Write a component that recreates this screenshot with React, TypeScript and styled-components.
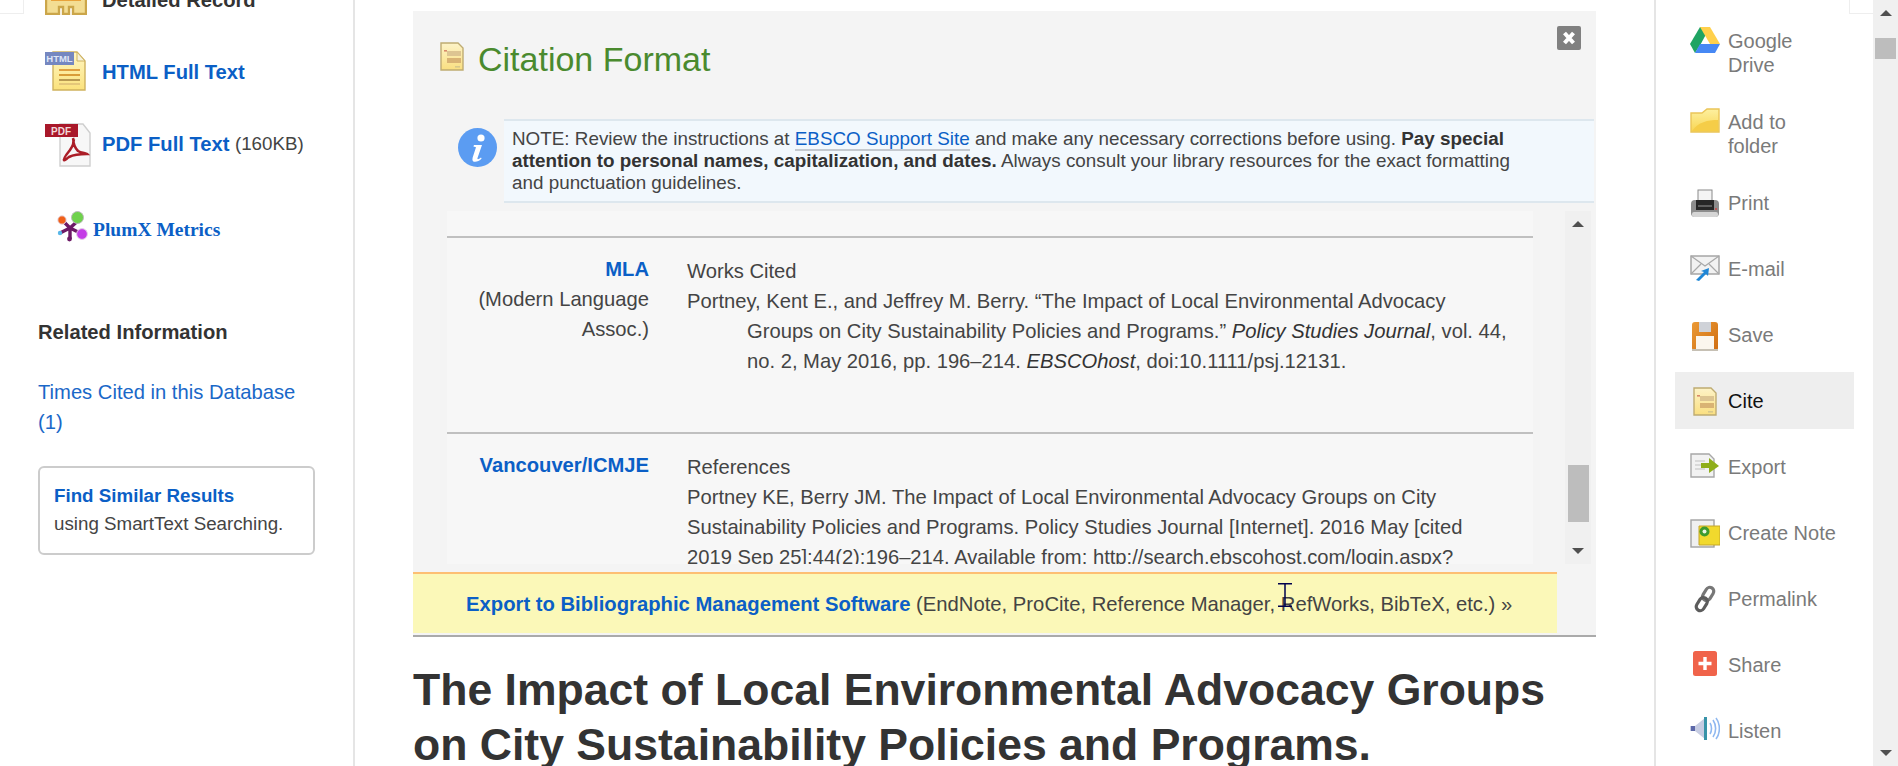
import React from "react";
import styled, { createGlobalStyle } from "styled-components";

const GlobalStyle = createGlobalStyle`
  html, body {
    margin: 0;
    padding: 0;
    background: #fff;
    overflow: hidden;
  }
  body {
    font-family: "Liberation Sans", Arial, sans-serif;
    color: #333;
  }
`;

/* icons */
const DetailIcon = () => (
  <svg width="42" height="38" viewBox="0 0 42 38">
    <path d="M1 0h40v37H28v-7h-4v7H18v-7h-4v7H1z" fill="#f3dd93" stroke="#cba64a" strokeWidth="2.4" />
    <rect x="6" y="19" width="30" height="5" fill="#e8a33c" />
  </svg>
);

const HtmlIcon = () => (
  <svg width="42" height="40" viewBox="0 0 42 40">
    <defs>
      <linearGradient id="htmlPaper" x1="0" y1="0" x2="0" y2="1">
        <stop offset="0" stopColor="#fff6c4" />
        <stop offset="1" stopColor="#fbe27c" />
      </linearGradient>
    </defs>
    <path d="M8 1h24l8 9v29H8z" fill="url(#htmlPaper)" stroke="#cfb25e" strokeWidth="1.4" />
    <path d="M32 1v9h8z" fill="#f5f1da" stroke="#cfb25e" />
    <rect x="14" y="18" width="21" height="2" fill="#e0a040" />
    <rect x="14" y="23" width="21" height="2" fill="#d99c38" />
    <rect x="14" y="28" width="21" height="2" fill="#b89a52" />
    <rect x="14" y="32" width="21" height="2" fill="#e4c779" />
    <rect x="0" y="1" width="29" height="13" fill="#7587c0" />
    <text x="14.5" y="11" textAnchor="middle" fontSize="9.5" fontWeight="700" fill="#dfe5f7" fontFamily="Liberation Sans">HTML</text>
  </svg>
);

const PdfIcon = () => (
  <svg width="46" height="44" viewBox="0 0 46 44">
    <path d="M15 1h23l7 9v33H15z" fill="#f7f7f7" stroke="#cfcfcf" strokeWidth="1.4" />
    <rect x="0" y="1" width="33" height="13" fill="#a9182a" />
    <text x="16" y="12" textAnchor="middle" fontSize="10" fontWeight="700" fill="#f1d9d9" fontFamily="Liberation Sans">PDF</text>
    <path
      d="M29 16c-2 4 2 10 4 12 3 2 8 2 9 3-4 0-12 0-18 3-3 2-4 4-5 3s2-5 6-10c3-4 4-9 3-12"
      fill="none"
      stroke="#ab1d27"
      strokeWidth="2.6"
    />
  </svg>
);

const PlumIcon = () => (
  <svg width="31" height="31" viewBox="0 0 31 31">
    <path d="M5 9l8 8M24 7l-11 10M25 23L13 17M3 22l10-5M13 17v11" stroke="#6d1a66" strokeWidth="3.4" fill="none" />
    <circle cx="5" cy="9" r="4.2" fill="#f06018" stroke="#e8dce8" />
    <circle cx="20.500" cy="6.500" r="6" fill="#6fd24c" stroke="#bbb" />
    <circle cx="25" cy="23" r="5.400" fill="#c43de6" stroke="#e5cfe9" />
    <circle cx="3" cy="22" r="2.200" fill="#59b7e8" />
    <circle cx="12.500" cy="28" r="2.400" fill="#6d1a66" />
  </svg>
);

const CiteIcon = () => (
  <svg width="24" height="29" viewBox="0 0 24 29">
    <defs>
      <linearGradient id="citePaper" x1="0" y1="0" x2="0" y2="1">
        <stop offset="0" stopColor="#fdf3c8" />
        <stop offset="1" stopColor="#fadf80" />
      </linearGradient>
    </defs>
    <path d="M1 1h17l5 5v22H1z" fill="url(#citePaper)" stroke="#bfac72" strokeWidth="1.4" />
    <rect x="4" y="8" width="3" height="1.600" fill="#d88a6a" />
    <rect x="7" y="9" width="14" height="5" fill="#ddc592" />
    <rect x="7" y="16" width="14" height="5" fill="#d9b374" />
    <rect x="15" y="24" width="5" height="1.600" fill="#d8c88a" />
  </svg>
);

const InfoIcon = () => (
  <svg width="39" height="39" viewBox="0 0 39 39">
    <circle cx="19.500" cy="19.500" r="19.500" fill="#5b9cf2" />
    <circle cx="23" cy="10" r="3.600" fill="#fff" />
    <path d="M16 17h8l-4.500 13c-.5 1.500.8 1.800 3.500-.5l.6 1c-3.500 4-10.500 5.200-9-.8l3.400-10.500-2.600-.6z" fill="#fff" />
  </svg>
);

const DriveIcon = () => (
  <svg width="30" height="26" viewBox="0 0 30 26">
    <path d="M10 0h10l-9.500 17.500L5 26 0 17z" fill="#1fa463" />
    <path d="M10 0h10l10 17H20z" fill="#ffd04b" />
    <path d="M10 17h20l-5 9H5z" fill="#4688f4" />
  </svg>
);

const FolderIcon = () => (
  <svg width="30" height="25" viewBox="0 0 30 25">
    <defs>
      <linearGradient id="folderFill" x1="0" y1="0" x2="0" y2="1">
        <stop offset="0" stopColor="#fdf0a0" />
        <stop offset="1" stopColor="#f8d552" />
      </linearGradient>
    </defs>
    <path d="M1 5h11l5-4h12v23H1z" fill="url(#folderFill)" stroke="#eac558" strokeWidth="1.400" />
    <path d="M2 23c6-9 16-11 26-11v11z" fill="#f5cd48" />
  </svg>
);

const PrintIcon = () => (
  <svg width="30" height="30" viewBox="0 0 30 30">
    <rect x="8" y="1" width="14" height="11" fill="#f4f4f4" stroke="#8a8a8a" />
    <rect x="1" y="11" width="28" height="17" rx="4" fill="#8d8d8d" />
    <rect x="6" y="11" width="18" height="10" fill="#262626" />
    <rect x="8" y="16" width="14" height="2" fill="#5d5d5d" />
    <rect x="2" y="23" width="26" height="5" rx="2" fill="#d5d5d5" />
    <circle cx="26" cy="20" r="1" fill="#c44" />
  </svg>
);

const MailIcon = () => (
  <svg width="30" height="26" viewBox="0 0 30 26">
    <rect x="1" y="1" width="28" height="18" fill="#f2f2f2" stroke="#a0a0a0" strokeWidth="1.400" />
    <path d="M1 1l14 10L29 1M1 19l10-10M29 19L19 9" fill="none" stroke="#a8a8a8" strokeWidth="1.200" />
    <path d="M6 25l8-8-3-1 8-3-1 8-2-2-7 7z" fill="#1f86d6" />
  </svg>
);

const SaveIcon = () => (
  <svg width="28" height="31" viewBox="0 0 28 31">
    <defs>
      <linearGradient id="saveBody" x1="0" y1="0" x2="1" y2="1">
        <stop offset="0" stopColor="#eb9a35" />
        <stop offset="1" stopColor="#cf6d12" />
      </linearGradient>
    </defs>
    <rect x="1" y="1" width="26" height="29" rx="3" fill="url(#saveBody)" />
    <rect x="8" y="1" width="12" height="10" fill="#cfd2d8" />
    <rect x="5" y="15" width="18" height="13" fill="#fbf6ee" />
    <rect x="1" y="28" width="26" height="2" fill="#c6c0b4" />
  </svg>
);

const ExportIcon = () => (
  <svg width="30" height="25" viewBox="0 0 30 25">
    <path d="M1 1h18l5 5v18H1z" fill="#f2f2f2" stroke="#a8a8a8" strokeWidth="1.400" />
    <path d="M5 8h10M5 12h8M5 16h10" stroke="#c0c0c0" />
    <path d="M11 10h8V5l10 8-10 7v-5h-8z" fill="#8fae1b" />
  </svg>
);

const NoteIcon = () => (
  <svg width="30" height="29" viewBox="0 0 30 29">
    <rect x="1" y="1" width="23" height="27" fill="#f0f0f0" stroke="#a2a2a2" strokeWidth="1.400" />
    <path d="M9 7h21v19H9z" fill="#f1d92d" stroke="#c5a62a" />
    <circle cx="14.500" cy="12.500" r="5" fill="#3d9a2d" />
    <circle cx="14.500" cy="12.500" r="2" fill="#e8f4e0" />
  </svg>
);

const LinkIcon = () => (
  <svg width="24" height="28" viewBox="0 0 24 28">
    <g transform="rotate(32 12 14)" fill="none" strokeWidth="3.200">
      <rect x="8" y="1" width="8" height="14" rx="4" stroke="#777" />
      <rect x="8" y="13" width="8" height="14" rx="4" stroke="#5c5c5c" />
    </g>
  </svg>
);

const ShareIcon = () => (
  <svg width="24" height="25" viewBox="0 0 24 25">
    <rect x="0" y="0" width="24" height="25" rx="2.500" fill="#f0634a" />
    <path d="M12 6v13M5.500 12.500h13" stroke="#fff" strokeWidth="3.400" />
  </svg>
);

const ListenIcon = () => (
  <svg width="30" height="23" viewBox="0 0 30 23">
    <path d="M0 9h5l10-8v21L5 14H0z" fill="#c6cce2" />
    <path d="M1 9h4v5H1z" fill="#5c68a8" />
    <rect x="14" y="0" width="3" height="23" fill="#3793a8" />
    <path d="M20 6c2 3 2 8 0 11M23 3c3.500 5 3.500 12 0 17M26 1c4.500 6 4.500 15 0 21" fill="none" stroke="#8fb8f0" strokeWidth="1.600" />
  </svg>
);

/* page frame */
const Page = styled.div`
  position: relative;
  display: flex;
  width: 1898px;
  height: 766px;
  overflow: hidden;
  background: #fff;
`;

const CornerTab = styled.div<{ $side: "left" | "right" }>`
  position: absolute;
  top: 0;
  ${(p) => (p.$side === "left" ? "left: 0; border-right: 1px solid #eee;" : "left: 1849px; border-left: 1px solid #eee;")}
  width: 23px;
  height: 13px;
  border-bottom: 1px solid #eee;
`;

const LeftColumn = styled.aside`
  flex: 0 0 355px;
  box-sizing: border-box;
  border-right: 2px solid #e5e5e5;
`;

const FormatList = styled.div`
  margin-top: -36px;
`;

const FormatRow = styled.div`
  display: flex;
  align-items: center;
  height: 72px;
  padding-left: 45px;
`;

const FormatIcon = styled.span<{ $shift?: number }>`
  display: flex;
  flex: 0 0 57px;
  margin-top: ${(p) => p.$shift ?? 0}px;
`;

const FormatLink = styled.a<{ $plain?: boolean }>`
  font-size: 20.200px;
  font-weight: 700;
  color: ${(p) => (p.$plain ? "#333" : "#0b5fc6")};
`;

const FileSize = styled.span`
  margin-left: 1px;
  font-size: 18.750px;
  color: #444;
`;

const PlumRow = styled.div`
  display: flex;
  align-items: center;
  gap: 5px;
  height: 30px;
  margin: 31px 0 0 57px;
`;

const PlumText = styled.a`
  margin-top: 7px;
  font-family: "Liberation Serif", "Times New Roman", serif;
  font-size: 19.500px;
  font-weight: 700;
  color: #0b5fc6;
`;

const Related = styled.section`
  margin: 79px 0 0 38px;
`;

const RelatedTitle = styled.h3`
  margin: 0;
  font-size: 20.200px;
  line-height: 24px;
  font-weight: 700;
  color: #333;
`;

const TimesCited = styled.a`
  display: block;
  width: 277px;
  margin-top: 33px;
  font-size: 20.200px;
  line-height: 30px;
  color: #1a68c8;
`;

const SimilarBox = styled.div`
  box-sizing: border-box;
  width: 277px;
  height: 89px;
  margin-top: 29px;
  padding: 14px 14px;
  border: 2px solid #ccc;
  border-radius: 6px;
  font-size: 18.750px;
  line-height: 28px;
  color: #444;
`;

const SimilarLink = styled.a`
  display: block;
  font-weight: 700;
  color: #0b5fc6;
`;

/* centre panel */
const Main = styled.main`
  flex: 0 0 1299px;
  box-sizing: border-box;
  padding: 11px 0 0 58px;
`;

const Panel = styled.section`
  position: relative;
  box-sizing: border-box;
  width: 1183px;
  height: 626px;
  padding-bottom: 2px;
  background: #f4f4f4;
  border-bottom: 2px solid #aaa;
`;

const PanelHeader = styled.header`
  display: flex;
  align-items: flex-start;
  gap: 14px;
  height: 108px;
  box-sizing: border-box;
  padding: 31px 0 0 27px;
`;

const PanelTitle = styled.h2`
  margin: -3px 0 0;
  font-size: 34px;
  line-height: 40px;
  font-weight: 400;
  color: #4a8a2e;
`;

const CloseButton = styled.button`
  position: absolute;
  top: 15px;
  left: 1144px;
  display: flex;
  align-items: center;
  justify-content: center;
  width: 24px;
  height: 24px;
  padding: 0;
  border: 0;
  border-radius: 2px;
  background: #808080;
`;

const NoteRow = styled.div`
  display: flex;
  gap: 7px;
  padding: 0 2px 0 45px;
`;

const NoteIconSlot = styled.span`
  display: flex;
  flex: 0 0 39px;
  margin-top: 9px;
`;

const NoteBox = styled.div`
  flex: 1;
  box-sizing: border-box;
  height: 84px;
  padding: 7px 0 0 8px;
  border-top: 2px solid #dde7ee;
  border-bottom: 2px solid #dde7ee;
  background: #f2f8fd;
  font-size: 18.850px;
  line-height: 22px;
  color: #444;
`;

const NoteText = styled.p`
  width: 1010px;
  margin: 0;
  strong {
    color: #333;
  }
`;

const NoteLink = styled.a`
  color: #0b5fc6;
  border-bottom: 2px solid #c4c9cf;
`;

const ListRow = styled.div`
  display: flex;
  height: 353px;
  margin-top: 8px;
  padding-left: 34px;
`;

const CitationList = styled.div`
  flex: 0 0 1086px;
  box-sizing: border-box;
  height: 353px;
  padding-top: 25px;
  overflow: hidden;
  background: #f7f7f7;
`;

const CitationRow = styled.div`
  display: flex;
  gap: 38px;
  padding: 18px 0 56px;
  border-top: 2px solid #c0c0c0;
`;

const StyleLabel = styled.div`
  flex: 0 0 202px;
  margin-top: -2px;
  text-align: right;
  font-size: 20.200px;
  line-height: 30px;
  color: #444;
`;

const StyleName = styled.a`
  display: block;
  font-weight: 700;
  color: #0b5fc6;
`;

const CitationBody = styled.div`
  width: 825px;
  font-size: 20.200px;
  line-height: 30px;
  color: #444;
  em {
    color: #333;
  }
`;

const Reference = styled.p<{ $hanging?: boolean }>`
  margin: 0;
  ${(p) => (p.$hanging ? "padding-left: 60px; text-indent: -60px;" : "")}
`;

const Track = styled.div<{ $width: number; $gutter?: number }>`
  display: flex;
  flex: 0 0 ${(p) => p.$width}px;
  flex-direction: column;
  align-items: center;
  margin-left: ${(p) => p.$gutter ?? 0}px;
  background: #f0f0f0;
`;

const Arrow = styled.span<{ $down?: boolean }>`
  width: 0;
  height: 0;
  border-left: 6px solid transparent;
  border-right: 6px solid transparent;
  ${(p) =>
    p.$down
      ? "border-top: 6px solid #505050; margin: auto 0 10px;"
      : "border-bottom: 6px solid #505050; margin-top: 10px;"}
`;

const Thumb = styled.span<{ $top: number; $height: number }>`
  width: 21px;
  height: ${(p) => p.$height}px;
  margin-top: ${(p) => p.$top}px;
  background: #bdbdbd;
`;

const ExportBar = styled.div`
  box-sizing: border-box;
  width: 1144px;
  height: 61px;
  margin-top: 8px;
  padding-left: 53px;
  border-top: 2px solid #fdbf73;
  background: #fbf8b8;
  font-size: 20.250px;
  line-height: 60px;
  color: #444;
`;

const ExportLink = styled.a`
  font-weight: 700;
  color: #0b5fc6;
`;

const TextCursor = styled.svg`
  position: absolute;
  top: 572px;
  left: 865px;
`;

const ArticleTitle = styled.h1`
  width: 1183px;
  margin: 25px 0 0;
  font-size: 44.550px;
  line-height: 55px;
  font-weight: 700;
  color: #333;
`;

/* tools column */
const ToolColumn = styled.nav`
  display: flex;
  flex: 0 0 219px;
  flex-direction: column;
  gap: 9px;
  box-sizing: border-box;
  padding: 12px 0 0 19px;
  border-left: 2px solid #e5e5e5;
`;

const ToolItem = styled.a<{ $active?: boolean }>`
  display: flex;
  gap: 8px;
  box-sizing: border-box;
  width: 179px;
  min-height: 57px;
  padding: 17px 0 7px 15px;
  background: ${(p) => (p.$active ? "#eee" : "transparent")};
  color: ${(p) => (p.$active ? "#111" : "#7a7a7a")};
  font-size: 20px;
  line-height: 24px;
`;

const ToolIcon = styled.span`
  display: flex;
  flex: 0 0 30px;
  justify-content: center;
  height: 30px;
  margin-top: -2px;
`;

const ToolLabel = styled.span`
  width: 112px;
`;

const PageScrollbar = styled(Track)`
  border-right: 1px solid #f4b860;
`;

const tools = [
  { label: "Google Drive", icon: <DriveIcon /> },
  { label: "Add to folder", icon: <FolderIcon /> },
  { label: "Print", icon: <PrintIcon /> },
  { label: "E-mail", icon: <MailIcon /> },
  { label: "Save", icon: <SaveIcon /> },
  { label: "Cite", icon: <CiteIcon />, active: true },
  { label: "Export", icon: <ExportIcon /> },
  { label: "Create Note", icon: <NoteIcon /> },
  { label: "Permalink", icon: <LinkIcon /> },
  { label: "Share", icon: <ShareIcon /> },
  { label: "Listen", icon: <ListenIcon /> },
];

export default function App() {
  return (
    <Page>
      <GlobalStyle />
      <CornerTab $side="left" />
      <CornerTab $side="right" />

      <LeftColumn>
        <FormatList>
          <FormatRow>
            <FormatIcon $shift={-8}>
              <DetailIcon />
            </FormatIcon>
            <FormatLink $plain>Detailed Record</FormatLink>
          </FormatRow>
          <FormatRow>
            <FormatIcon $shift={-3}>
              <HtmlIcon />
            </FormatIcon>
            <FormatLink>HTML Full Text</FormatLink>
          </FormatRow>
          <FormatRow>
            <FormatIcon $shift={2}>
              <PdfIcon />
            </FormatIcon>
            <FormatLink>PDF Full Text</FormatLink>&nbsp;<FileSize>(160KB)</FileSize>
          </FormatRow>
        </FormatList>
        <PlumRow>
          <PlumIcon />
          <PlumText>PlumX Metrics</PlumText>
        </PlumRow>
        <Related>
          <RelatedTitle>Related Information</RelatedTitle>
          <TimesCited>Times Cited in this Database (1)</TimesCited>
          <SimilarBox>
            <SimilarLink>Find Similar Results</SimilarLink>
            using SmartText Searching.
          </SimilarBox>
        </Related>
      </LeftColumn>

      <Main>
        <Panel>
          <PanelHeader>
            <CiteIcon />
            <PanelTitle>Citation Format</PanelTitle>
          </PanelHeader>
          <CloseButton aria-label="Close">
            <svg width="14" height="14" viewBox="0 0 14 14">
              <path d="M2.500 2l9 10M11.500 2l-9 10" stroke="#fff" strokeWidth="4" />
            </svg>
          </CloseButton>
          <NoteRow>
            <NoteIconSlot>
              <InfoIcon />
            </NoteIconSlot>
            <NoteBox>
              <NoteText>
                NOTE: Review the instructions at <NoteLink>EBSCO Support Site</NoteLink> and make any necessary
                corrections before using. <strong>Pay special attention to personal names, capitalization, and dates.</strong>{" "}
                Always consult your library resources for the exact formatting and punctuation guidelines.
              </NoteText>
            </NoteBox>
          </NoteRow>
          <ListRow>
            <CitationList>
              <CitationRow>
                <StyleLabel>
                  <StyleName>MLA</StyleName>
                  (Modern Language Assoc.)
                </StyleLabel>
                <CitationBody>
                  <Reference>Works Cited</Reference>
                  <Reference $hanging>
                    Portney, Kent E., and Jeffrey M. Berry. “The Impact of Local Environmental Advocacy Groups on City
                    Sustainability Policies and Programs.” <em>Policy Studies Journal</em>, vol. 44, no. 2, May 2016, pp.
                    196–214. <em>EBSCOhost</em>, doi:10.1111/psj.12131.
                  </Reference>
                </CitationBody>
              </CitationRow>
              <CitationRow>
                <StyleLabel>
                  <StyleName>Vancouver/ICMJE</StyleName>
                </StyleLabel>
                <CitationBody>
                  <Reference>References</Reference>
                  <Reference>
                    Portney KE, Berry JM. The Impact of Local Environmental Advocacy Groups on City Sustainability
                    Policies and Programs. Policy Studies Journal [Internet]. 2016 May [cited 2019 Sep 25];44(2):196–214.
                    Available from: http://search.ebscohost.com/login.aspx?
                  </Reference>
                </CitationBody>
              </CitationRow>
            </CitationList>
            <Track $width={26} $gutter={32}>
              <Arrow />
              <Thumb $top={238} $height={57} />
              <Arrow $down />
            </Track>
          </ListRow>
          <ExportBar>
            <ExportLink>Export to Bibliographic Management Software</ExportLink> (EndNote, ProCite, Reference Manager,
            RefWorks, BibTeX, etc.) »
          </ExportBar>
          <TextCursor width="14" height="24" viewBox="0 0 14 24">
            <path d="M0 .75h14M0 23.250h14M7 1v22" stroke="#00004e" strokeWidth="1.500" fill="none" />
          </TextCursor>
        </Panel>
        <ArticleTitle>The Impact of Local Environmental Advocacy Groups on City Sustainability Policies and Programs.</ArticleTitle>
      </Main>

      <ToolColumn>
        {tools.map((tool) => (
          <ToolItem key={tool.label} $active={tool.active}>
            <ToolIcon>{tool.icon}</ToolIcon>
            <ToolLabel>{tool.label}</ToolLabel>
          </ToolItem>
        ))}
      </ToolColumn>

      <PageScrollbar $width={25}>
        <Arrow />
        <Thumb $top={22} $height={21} />
        <Arrow $down />
      </PageScrollbar>
    </Page>
  );
}
